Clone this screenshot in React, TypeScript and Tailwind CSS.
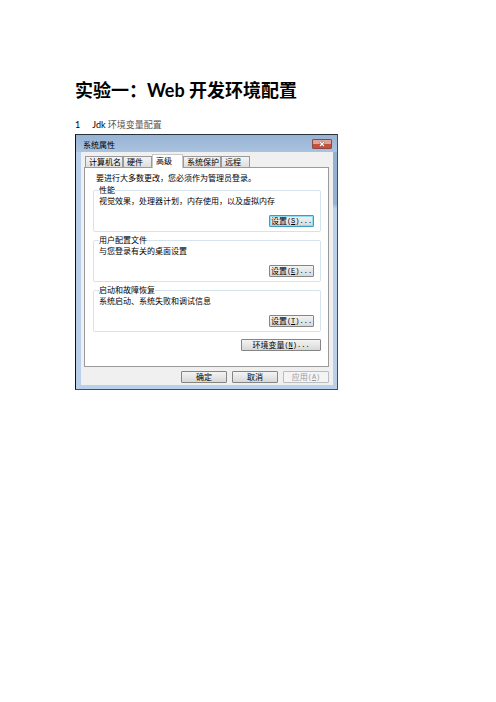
import React, { useState } from 'react';

interface SettingsGroupProps {
  title: string;
  description: string;
  mnemonic: string;
  focused?: boolean;
}

interface DialogButtonProps {
  label: string;
  mnemonic?: string;
  dots?: boolean;
  focused?: boolean;
  disabled?: boolean;
  className?: string;
}

const tabs = [
  { name: '计算机名', width: 'w-[38px]' },
  { name: '硬件', width: 'w-[29px]' },
  { name: '高级', width: 'w-[31px]' },
  { name: '系统保护', width: 'w-[38px]' },
  { name: '远程', width: 'w-[29px]' },
];

const groups: SettingsGroupProps[] = [
  {
    title: '性能',
    description: '视觉效果，处理器计划，内存使用，以及虚拟内存',
    mnemonic: 'S',
    focused: true,
  },
  { title: '用户配置文件', description: '与您登录有关的桌面设置', mnemonic: 'E' },
  { title: '启动和故障恢复', description: '系统启动、系统失败和调试信息', mnemonic: 'T' },
];

const DialogButton: React.FC<DialogButtonProps> = ({
  label,
  mnemonic,
  dots,
  focused,
  disabled,
  className = '',
}) => {
  let colors = 'border-[#858585] text-black';
  if (focused) colors = 'border-[#3c9cc4] text-black ring-1 ring-inset ring-[#8fdcf3]';
  if (disabled) colors = 'border-[#b9bcc0] text-[#9a9a9a]';

  return (
    <button
      type="button"
      disabled={disabled}
      className={`flex h-3 items-center justify-center whitespace-nowrap rounded-[1px] border bg-linear-to-b from-[#f4f4f4] to-[#d8d8d8] disabled:from-[#f4f4f4] disabled:to-[#f4f4f4] ${colors} ${className}`}
    >
      {label}
      {mnemonic && (
        <span className="font-['Liberation_Mono',monospace] text-[7px]">
          (<u>{mnemonic}</u>){dots && '...'}
        </span>
      )}
    </button>
  );
};

const SettingsGroup: React.FC<SettingsGroupProps> = ({ title, description, mnemonic, focused }) => (
  <fieldset className="rounded-xs border border-[#d5e3ec] px-[5px] pb-1">
    <legend className="leading-[8px]">{title}</legend>
    <p className="whitespace-nowrap leading-[14px]">{description}</p>
    <DialogButton
      label="设置"
      mnemonic={mnemonic}
      dots
      focused={focused}
      className="mt-[7px] ml-auto mr-px w-[45px]"
    />
  </fieldset>
);

const SystemProperties: React.FC = () => {
  const [activeTab, setActiveTab] = useState('高级');

  return (
    <section
      aria-label="系统属性"
      className="mt-0.5 w-full max-w-[263px] border border-t-[#26323c] border-l-[#111111] border-r-[#1c5f74] border-b-[#1c5f74] bg-linear-to-b from-[#94b1d1] from-27% to-[#b9d0eb] to-29% text-[8px] leading-[10px]"
    >
      <header className="flex h-[17px] items-center justify-between bg-linear-to-b from-[#98b3d3] to-[#a9c3df] pr-[5px] pl-[7px]">
        <h2 className="mt-0.5">系统属性</h2>
        <button
          type="button"
          aria-label="关闭"
          className="flex h-[10px] w-5 items-center justify-center rounded-[1px] border border-[#8a4a48] bg-linear-to-b from-[#e0a398] from-45% to-[#c8503a] to-55%"
        >
          <svg viewBox="0 0 8 6" className="h-1.5 w-2" fill="none">
            <path d="M2 1 6 5M6 1 2 5" stroke="#6f4b52" strokeWidth="2.4" />
            <path d="M2 1 6 5M6 1 2 5" stroke="#ffffff" strokeWidth="1.4" />
          </svg>
        </button>
      </header>

      <div className="border-l-[5px] border-[#b9d0eb]">
        <div className="mr-1 bg-[#f0f0f0] py-0.5 pr-1 pl-[3px]">
          <div role="tablist" className="flex items-end pl-px">
            {tabs.map(({ name, width }) => (
              <button
                key={name}
                type="button"
                role="tab"
                aria-selected={activeTab === name}
                onClick={() => setActiveTab(name)}
                className={`whitespace-nowrap border border-b-0 pl-[3px] text-left ${width} ${
                  activeTab === name
                    ? '-mb-px h-[14px] border-[#c8c8c8] bg-white pb-0.5'
                    : 'h-[11px] border-[#9a9a9a] bg-linear-to-b from-[#f4f4f4] to-[#dedede]'
                }`}
              >
                {name}
              </button>
            ))}
          </div>

          <div
            role="tabpanel"
            className="border border-[#9a9a9a] bg-white pt-[5px] pr-[7px] pb-[15px] pl-2"
          >
            <p className="whitespace-nowrap pb-[3px] pl-[3px]">
              要进行大多数更改，您必须作为管理员登录。
            </p>
            <div className="flex flex-col gap-1">
              {groups.map((group) => (
                <SettingsGroup key={group.title} {...group} />
              ))}
            </div>
            <DialogButton label="环境变量" mnemonic="N" dots className="mt-[7px] ml-auto w-20" />
          </div>

          <footer className="mt-1 flex justify-end gap-[5px]">
            <DialogButton label="确定" className="w-[46px]" />
            <DialogButton label="取消" className="w-[46px]" />
            <DialogButton label="应用" mnemonic="A" disabled className="w-[46px]" />
          </footer>
        </div>
        <div className="h-1 bg-[#b9d0eb]" />
      </div>
    </section>
  );
};

const App: React.FC = () => (
  <main className="min-h-screen bg-white px-[75px] pt-[76px] font-['Lato','Noto_Sans_CJK_SC',sans-serif] text-black">
    <h1 className="text-lg leading-7 font-bold">实验一：Web 开发环境配置</h1>
    <ol className="mt-[14px] text-[9px] leading-[14px]">
      <li className="flex gap-3">
        <span>1</span>
        <span>
          Jdk <span className="text-[#555555]">环境变量配置</span>
        </span>
      </li>
    </ol>
    <SystemProperties />
  </main>
);

export default App;
